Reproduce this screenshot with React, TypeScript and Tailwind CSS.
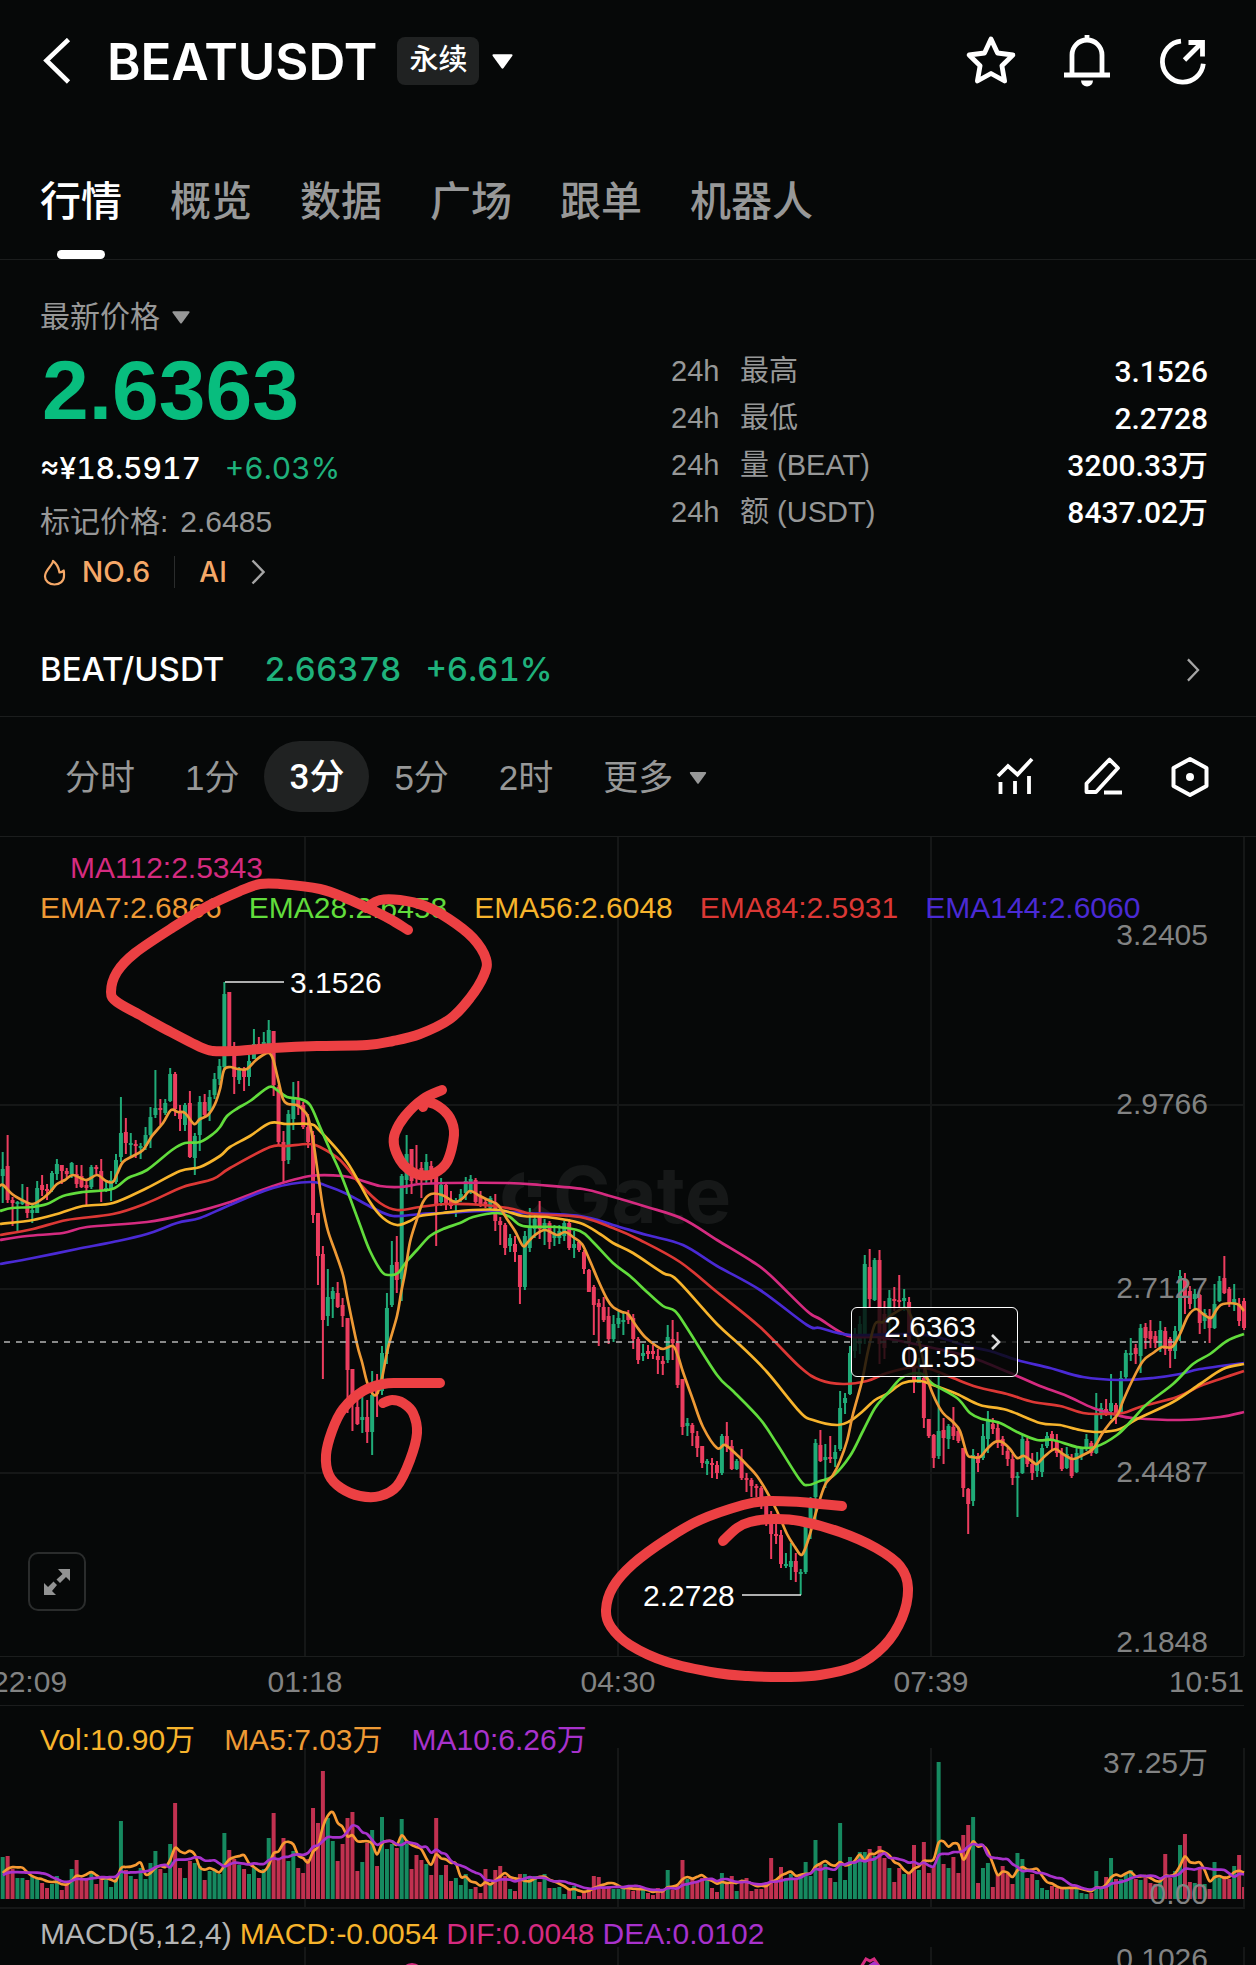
import { useState } from 'react';

type Point = [number, number];

const CANDLE_STEP = 4.926;
const CANDLE_START = 2.7;

// direction, high, body top, body bottom, low (chart units)
const candleData = `
g 315 332 339 366|r 298 329 363 366|r 360 363 366 389|g 364 365 367 394|g 347 364 367 368|r 350 366 376 381|g 366 373 376 386
g 344 351 376 376|r 338 348 353 359|r 347 352 354 363|g 334 336 353 355|g 322 327 337 343|r 328 328 334 347|r 331 334 337 341
g 325 326 337 341|r 328 337 347 351|r 328 339 350 351|r 342 348 351 368|g 328 330 350 352|r 328 330 332 337|r 322 334 353 365
g 343 351 353 355|g 334 343 353 364|g 317 323 345 347|g 260 296 320 325|r 281 295 306 317|g 296 306 308 320|r 303 307 309 321
g 306 309 311 322|g 290 298 309 313|g 270 280 298 311|g 233 271 278 281|r 262 271 273 288|g 262 266 276 278|g 231 237 264 265
r 235 237 272 279|r 268 276 282 294|g 266 268 288 294|r 254 266 320 321|g 296 299 321 338|g 259 265 298 314|r 257 265 278 280
g 253 260 274 284|g 236 242 258 262|g 222 229 242 248|g 145 157 230 232|r 155 155 213 218|r 205 216 240 257|g 230 232 243 247
r 230 232 240 254|g 218 224 240 249|g 192 207 222 222|r 200 207 212 214|g 195 205 212 214|g 183 193 207 212|r 194 194 248 259
r 248 250 305 309|r 294 305 324 345|g 273 277 323 327|g 245 262 282 293|r 244 262 270 278|r 265 268 290 292|r 277 290 305 311
r 294 298 378 386|r 376 376 419 448|r 409 417 483 542|g 432 460 479 489|g 450 454 462 481|r 445 456 470 471|r 461 468 479 490
r 481 481 533 576|r 532 532 560 594|r 560 570 587 588|g 560 580 583 596|r 563 580 595 606|g 534 558 595 618|r 537 554 557 580
g 509 516 554 558|g 456 471 517 527|g 404 428 468 470|r 399 425 443 456|g 337 339 442 464|g 298 317 343 357|r 312 312 344 357
r 308 333 341 346|r 325 331 338 361|g 317 325 342 346|r 324 329 342 346|r 340 340 369 409|g 341 348 365 369|r 347 348 367 373
r 354 363 369 372|g 361 363 368 380|g 352 357 363 365|g 340 344 356 363|g 338 342 354 357|r 341 343 365 368|r 354 359 367 370
r 361 365 368 371|g 359 361 371 373|r 357 365 384 394|r 380 384 388 408|r 386 388 411 418|g 397 401 409 415|r 399 407 415 425
r 418 418 450 467|g 394 399 450 453|g 371 390 411 415|g 378 382 392 401|r 364 380 392 402|g 382 386 394 408|r 384 386 405 412
g 388 397 401 409|g 388 394 401 407|g 384 386 399 404|r 382 386 411 413|g 394 407 411 421|r 403 405 413 415|r 413 415 432 437
r 432 433 455 455|r 448 450 468 498|r 462 466 470 509|r 460 470 483 485|r 470 479 502 507|g 478 487 502 505|g 474 481 487 491
g 475 483 485 498|r 473 477 483 487|r 477 481 502 512|r 500 502 523 527|g 507 516 519 524|r 508 514 517 522|r 508 514 517 522
r 512 519 523 537|r 519 524 527 538|g 488 500 523 526|r 483 502 506 523|r 495 506 548 551|r 542 542 590 598|g 581 586 589 599
r 586 588 596 609|r 594 599 611 620|r 609 609 626 631|g 622 624 627 638|r 621 626 628 641|r 624 628 636 642|g 597 599 636 638
r 585 599 609 615|r 603 609 632 633|g 622 624 632 633|r 612 622 641 643|r 636 641 643 655|r 641 643 649 660|r 647 649 651 660
r 649 651 666 672|r 664 668 685 689|r 674 681 697 722|r 687 697 699 707|r 693 698 727 731|g 716 727 729 731|g 706 724 730 743
r 716 724 735 745|g 732 735 737 758|g 685 687 735 737|g 660 668 685 702|g 602 606 660 683|r 593 608 624 625|g 607 620 623 651
r 599 620 622 626|g 608 615 622 630|g 554 571 612 614|g 556 561 566 577|g 509 516 557 558|g 491 497 514 521|g 479 487 507 517
g 418 427 497 507|r 412 430 462 471|g 421 423 463 464|r 413 423 507 527|r 464 477 511 522|g 453 461 484 497|r 450 462 464 474
r 438 463 465 471|g 452 461 464 474|r 460 465 507 531|r 517 531 544 556|g 521 537 546 546|r 531 541 581 591|r 582 582 599 601
r 597 598 621 631|g 537 594 619 622|r 581 593 601 627|g 587 589 602 612|r 570 590 599 603|r 591 594 604 606|r 611 611 651 660
r 651 652 667 697|g 612 618 664 669|r 616 619 626 635|g 587 599 621 623|g 574 584 602 616|r 581 587 592 597|r 586 591 606 611
r 599 602 609 618|r 611 614 622 629|r 617 622 641 648|g 635 639 641 680|g 598 602 636 637|r 601 604 627 630|r 616 627 636 643
g 615 626 634 640|g 607 611 635 640|g 595 599 609 611|r 594 597 602 614|r 597 604 616 620|r 611 616 632 634|g 610 617 631 632
r 617 621 639 641|g 611 616 635 636|g 610 612 619 623|g 597 602 612 614|r 604 606 616 619|g 556 576 616 617|g 566 571 577 582
r 562 572 577 579|g 537 566 574 582|r 566 568 577 587|g 534 541 576 577|g 513 516 540 542|g 501 516 518 524|r 507 511 517 527
g 487 491 519 536|r 486 490 501 512|r 483 494 502 511|r 494 499 506 511|g 484 493 510 515|r 490 494 512 518|r 500 502 514 531
g 489 494 514 522|g 433 439 494 504|r 436 442 461 477|r 449 454 467 472|g 452 457 462 472|r 457 458 486 497|g 472 476 484 492
r 472 479 491 506|g 447 467 491 492|g 439 444 464 465|r 419 441 456 457|r 450 452 467 470|g 447 462 466 474|r 461 467 484 489
r 461 464 491 493`;

const candles = candleData
  .trim()
  .split(/[|\n]/)
  .map((row, i) => {
    const [dir, ...rest] = row.split(' ');
    const [high, top, bottom, low] = rest.map(Number);
    return { x: CANDLE_START + i * CANDLE_STEP, up: dir === 'g', high, top, bottom, low };
  });

const volumes = [
  42, 43, 30, 21, 21, 19, 23, 20, 16, 11, 15, 23, 9, 15, 30, 39, 20, 19, 26, 15, 23, 21, 12, 20, 78, 29, 23, 20, 31, 20,
  36, 48, 30, 26, 55, 96, 31, 21, 38, 36, 33, 19, 28, 29, 25, 66, 49, 40, 34, 30, 25, 31, 21, 30, 61, 86, 40, 61, 38, 48,
  31, 26, 40, 91, 76, 128, 81, 58, 38, 55, 81, 87, 28, 37, 56, 69, 33, 82, 50, 55, 51, 80, 55, 30, 44, 39, 35, 24, 81, 24,
  34, 18, 21, 14, 25, 10, 12, 6, 30, 15, 29, 33, 23, 10, 8, 25, 25, 21, 23, 17, 25, 11, 11, 12, 5, 9, 13, 3, 6, 10, 23, 22,
  11, 13, 10, 10, 11, 12, 8, 9, 9, 6, 4, 11, 9, 29, 9, 13, 39, 20, 21, 18, 21, 20, 11, 7, 26, 16, 23, 8, 18, 21, 8, 10, 10,
  16, 41, 18, 32, 21, 25, 20, 23, 37, 23, 59, 35, 35, 21, 17, 76, 19, 42, 38, 47, 47, 50, 43, 53, 41, 31, 17, 31, 25, 25,
  54, 29, 57, 26, 33, 137, 35, 31, 42, 26, 64, 74, 82, 16, 31, 36, 12, 25, 33, 25, 15, 46, 40, 21, 25, 19, 11, 9, 13, 11,
  11, 11, 10, 12, 6, 5, 6, 28, 11, 22, 41, 20, 20, 25, 29, 20, 19, 21, 16, 15, 18, 45, 21, 28, 54, 65, 17, 16, 31, 15, 10,
  37, 21, 23, 20, 33, 44, 12,
];

const averages = [
  {
    name: 'MA112',
    color: '#d52b80',
    points:
      '0,403 27,399 63,396 87,390 147,385 187,377 227,366 273,349 310,339 343,339 360,343 380,349 400,350 420,347 447,346 507,346 540,348 583,352 610,359 647,370 683,382 717,403 753,425 770,438 807,474 820,482 840,495 853,500 877,500 900,504 933,511 973,521 1017,539 1040,549 1067,559 1093,571 1117,578 1133,581 1180,583 1220,580 1244,575',
  },
  {
    name: 'EMA144',
    color: '#4a2ad4',
    points:
      '0,427 33,421 77,412 113,405 147,397 177,386 200,381 230,368 273,351 310,345 327,349 347,357 373,371 393,379 420,377 443,376 487,374 523,376 580,379 613,388 647,398 683,408 717,429 760,453 807,488 820,491 850,498 900,497 933,499 967,509 990,514 1017,523 1050,531 1083,540 1120,543 1153,541 1180,537 1200,532 1244,526',
  },
  {
    name: 'EMA84',
    color: '#dc3835',
    points:
      '0,398 33,392 67,383 113,377 147,366 183,350 213,342 230,331 270,310 287,309 308,307 320,310 340,323 360,347 380,366 397,373 420,370 447,367 483,368 513,372 533,377 580,380 613,391 640,403 680,425 717,455 760,490 800,530 820,543 843,547 867,544 887,536 913,530 930,532 953,541 977,550 1007,557 1033,565 1060,569 1083,576 1100,577 1123,576 1140,570 1177,560 1200,549 1223,541 1244,534',
  },
  {
    name: 'EMA56',
    color: '#f7b42c',
    points:
      '0,387 33,383 57,377 83,369 113,366 147,351 180,334 200,330 220,319 230,310 250,299 270,286 287,287 310,287 320,294 347,325 370,365 383,381 397,388 410,384 420,379 443,376 473,373 500,373 523,379 547,380 580,386 600,397 613,406 633,416 663,436 677,443 717,487 740,508 767,535 800,575 813,583 837,588 850,584 863,574 875,563 887,557 903,546 920,544 933,548 957,557 980,568 1007,573 1040,586 1060,588 1080,593 1100,595 1120,592 1137,582 1173,565 1200,547 1223,532 1244,527',
  },
  {
    name: 'EMA28',
    color: '#61dc3c',
    points:
      '0,374 12,371 32,370 47,367 63,359 83,355 112,352 128,341 147,333 172,313 185,306 200,305 213,297 220,290 227,279 238,271 250,264 269,250 277,253 287,260 300,262 310,268 320,290 330,313 340,335 350,361 360,388 370,414 382,435 390,438 398,436 407,424 417,413 430,399 443,392 460,386 473,380 497,376 510,380 523,389 557,390 580,394 593,405 613,426 630,439 647,455 663,469 675,474 687,491 717,538 733,554 760,582 777,607 800,643 808,648 820,644 833,639 850,619 863,594 875,571 887,557 900,542 910,537 922,537 933,547 957,561 970,576 982,582 1000,586 1017,595 1037,603 1053,603 1077,610 1095,610 1117,598 1133,582 1147,567 1173,547 1193,527 1210,517 1227,504 1244,497',
  },
  {
    name: 'EMA7',
    color: '#ee9a35',
    points:
      '0,349 3,348 12,357 20,362 32,367 42,362 50,355 57,347 65,343 73,338 86,343 97,338 106,344 113,345 117,337 123,325 133,319 143,313 152,299 163,286 171,273 178,275 185,276 194,287 200,282 208,278 215,267 220,252 224,233 230,230 238,232 247,232 255,224 263,218 269,216 273,222 278,242 283,262 288,267 297,268 303,273 308,280 313,303 318,337 323,371 328,394 335,414 343,438 348,464 357,507 362,525 367,545 372,556 377,557 382,541 388,511 397,479 401,456 405,436 410,405 417,382 423,365 431,357 442,358 455,365 463,361 470,354 480,359 488,363 498,368 507,382 515,394 523,409 528,405 535,398 545,393 557,398 565,395 573,400 582,407 590,424 598,443 607,462 613,470 622,475 628,477 637,490 645,500 655,508 663,512 673,509 678,519 683,535 693,563 703,590 717,611 725,608 737,618 747,628 757,639 767,655 777,674 787,697 795,710 801,718 805,712 810,697 817,672 825,648 833,638 840,624 847,604 853,577 862,544 868,514 875,487 883,485 893,477 905,471 910,477 917,497 925,531 928,544 935,562 943,576 953,585 960,594 967,617 972,620 980,620 987,612 995,605 1002,605 1010,612 1017,621 1024,619 1033,625 1037,627 1045,619 1055,612 1063,617 1073,622 1083,618 1093,612 1102,597 1110,586 1118,577 1123,564 1133,542 1143,524 1153,516 1162,510 1172,510 1180,497 1188,479 1196,472 1203,477 1211,481 1217,472 1223,467 1237,467 1244,474',
  },
];

// hand-drawn marks around the highs and lows
const marks = [
  '408,93 390,82 372,73 348,62 320,52 280,47 260,47 240,54 208,69 172,91 135,116 117,135 111,155 117,165 140,178 167,193 200,210 213,214 233,214 273,211 317,209 367,208 393,204 420,197 450,182 470,161 484,138 486,122 473,101 449,82 425,69 400,63 380,63 366,71',
  '442,253 423,262 405,279 395,296 394,308 400,323 408,332 420,338 433,337 447,325 454,298 450,281 438,269 425,265 423,270',
  '440,546 400,546 383,547 363,554 343,572 332,594 326,618 329,638 341,651 360,659 380,659 397,649 410,623 417,596 413,576 403,566 392,563 383,566',
  '842,669 820,667 800,665 767,664 743,668 700,683 667,702 633,727 613,750 606,773 611,790 630,808 667,825 717,836 748,839 788,840 820,838 856,829 884,809 902,781 908,751 900,729 876,711 840,695 800,684 773,682 750,685 737,691 723,704',
];

const parsePoints = (text: string) =>
  text.split(' ').map((pair) => pair.split(',').map(Number) as Point);

// Catmull-Rom spline through the given points
function smoothPath(points: Point[]) {
  let d = `M${points[0][0]} ${points[0][1]}`;
  for (let i = 0; i < points.length - 1; i++) {
    const p0 = points[Math.max(i - 1, 0)];
    const p1 = points[i];
    const p2 = points[i + 1];
    const p3 = points[Math.min(i + 2, points.length - 1)];
    const c1 = [p1[0] + (p2[0] - p0[0]) / 6, p1[1] + (p2[1] - p0[1]) / 6];
    const c2 = [p2[0] - (p3[0] - p1[0]) / 6, p2[1] - (p3[1] - p1[1]) / 6];
    d += `C${c1[0].toFixed(1)} ${c1[1].toFixed(1)} ${c2[0].toFixed(1)} ${c2[1].toFixed(1)} ${p2[0]} ${p2[1]}`;
  }
  return d;
}

function movingAverage(values: number[], period: number, base: number): Point[] {
  return values.map((_, i) => {
    const part = values.slice(Math.max(0, i - period + 1), i + 1);
    // the bars before the window are not loaded, assume a quiet market there
    const missing = period - part.length;
    const sum = part.reduce((a, b) => a + b, 0) + missing * 22;
    return [CANDLE_START + i * CANDLE_STEP, base - sum / period];
  });
}

const GRID_X = [305, 618, 931, 1244];
const GRID_Y = [268, 452, 636];

const priceLabels = [
  { text: '3.2405', y: 97 },
  { text: '2.9766', y: 266 },
  { text: '2.7127', y: 450 },
  { text: '2.4487', y: 634 },
  { text: '2.1848', y: 804 },
];

const tabs = ['行情', '概览', '数据', '广场', '跟单', '机器人'];
const periods = ['分时', '1分', '3分', '5分', '2时'];

const stats = [
  { label: '最高', value: '3.1526' },
  { label: '最低', value: '2.2728' },
  { label: '量 (BEAT)', value: '3200.33万' },
  { label: '额 (USDT)', value: '8437.02万' },
];

function Caret({ className }: { className: string }) {
  return (
    <svg viewBox="0 0 20 14" className={className} fill="currentColor" aria-hidden="true">
      <path d="M1.5 0h17q1.6.2.8 1.7L11 13.2q-1 1.2-2 0L.7 1.7Q-.1.2 1.5 0Z" />
    </svg>
  );
}

function ChevronRight({ className }: { className: string }) {
  return (
    <svg viewBox="0 0 14 26" className={className} fill="none" stroke="currentColor" strokeWidth="2.4" aria-hidden="true">
      <path d="m1.5 1.5 11 11.5-11 11.5" />
    </svg>
  );
}

function Header() {
  return (
    <header className="flex h-[122px] items-center justify-between px-[41px]">
      <div className="flex items-center">
        <button type="button" aria-label="返回" className="mr-9 pl-[2px]">
          <svg viewBox="0 0 28 46" className="h-[46px] w-7" fill="none" stroke="currentColor" strokeWidth="4.6">
            <path d="M25.5 1.5 3.500 22.500l22 21.500" />
          </svg>
        </button>
        <h1 className="font-['Inter',sans-serif] text-[51px] leading-none font-semibold">BEATUSDT</h1>
        <button type="button" aria-haspopup="menu" className="ml-5 flex items-center gap-[13px]">
          <span className="flex h-12 items-center rounded-lg bg-[#202222] px-3 text-[29px] font-medium">永续</span>
          <Caret className="h-[15px] w-[21px]" />
        </button>
      </div>
      <div className="flex items-center gap-11 pr-[6px]">
        <button type="button" aria-label="收藏">
          <svg viewBox="0 0 52 52" className="size-[52px]" fill="none" stroke="currentColor" strokeWidth="4.8" strokeLinejoin="round">
            <path d="m26 4 6.500 14 15.400 2-11 10.700 2.700 15.300L26 38.500 12.400 46l2.700-15.300L4.100 20l15.400-2Z" />
          </svg>
        </button>
        <button type="button" aria-label="提醒">
          <svg viewBox="0 0 52 52" className="size-[52px]" fill="none" stroke="currentColor" strokeWidth="4.8">
            <path d="M26 0v6M11 40V20a15 15 0 0 1 30 0v20M3 40h46" />
            <path d="M20 45.500h12a6 6 0 0 1-12 0Z" fill="currentColor" stroke="none" />
          </svg>
        </button>
        <button type="button" aria-label="分享">
          <svg viewBox="0 0 52 52" className="size-[52px]" fill="none" stroke="currentColor" strokeWidth="4.8">
            <path d="M24 6.200a20.500 20.500 0 1 0 22.300 22.600" />
            <path d="M27.500 25 44 8.500M31.500 7.500h14v14" />
          </svg>
        </button>
      </div>
    </header>
  );
}

function Tabs() {
  const [active, setActive] = useState('行情');
  return (
    <nav className="flex gap-12 border-b border-[#1b1d1d] px-10 pt-14">
      {tabs.map((tab) => (
        <button
          key={tab}
          type="button"
          onClick={() => setActive(tab)}
          className={`flex flex-col items-center text-[41px] leading-[48px] font-medium ${tab === active ? 'text-white' : 'text-[#979898]'}`}
        >
          {tab}
          <span className={`mt-6 h-[9px] w-12 rounded-full ${tab === active ? 'bg-white' : ''}`} />
        </button>
      ))}
    </nav>
  );
}

function Summary() {
  return (
    <section className="flex justify-between px-10 pt-9">
      <div>
        <div className="flex h-[42px] items-center gap-3 text-[#979898]">
          <label htmlFor="price-type" className="sr-only">价格类型</label>
          <select id="price-type" className="appearance-none bg-transparent text-[30px] leading-[42px] outline-none">
            <option>最新价格</option>
            <option>标记价格</option>
            <option>指数价格</option>
          </select>
          <Caret className="h-[13px] w-[18px]" />
        </div>
        <p className="mt-3 pl-[2px] text-[84px] leading-[80px] font-bold text-[#08bd7e]">2.6363</p>
        <p className="mt-[17px] flex gap-6 font-['Inter','Noto_Sans_CJK_SC',sans-serif] text-[30px] leading-[42px] font-medium">
          <span>≈¥18.5917</span>
          <span className="font-normal text-[#1fb27c]">+6.03%</span>
        </p>
        <p className="mt-3 flex gap-3 text-[30px] leading-[42px] text-[#979898]">
          <span>标记价格:</span>
          <span>2.6485</span>
        </p>
        <a
          href="#rank"
          className="mt-2 flex h-[42px] items-center font-['Inter',sans-serif] text-[28px] font-medium text-[#f5a868]"
        >
          <svg viewBox="0 0 24 28" className="mr-[15px] ml-[3px] h-7 w-6" fill="none" stroke="currentColor" strokeWidth="2.2" strokeLinejoin="round">
            <path d="M10 3C9.500 8 2 11.500 2 18.500 2 23 6 26.500 11.500 26.500S21 23 21 18c0-2 .2-3.800-.3-5.500-1 1.200-2.200 1.800-4.200 2C15.800 9.500 13.500 5.500 10 3Z" />
          </svg>
          NO.6
          <span className="mx-6 h-8 w-px bg-[#2a2c2c]" />
          AI
          <ChevronRight className="ml-6 h-[26px] w-[14px] text-[#a5a5a5]" />
        </a>
      </div>
      <table className="mt-[52px] mr-2 w-[537px] self-start text-[29px]">
        <tbody>
          {stats.map((stat) => (
            <tr key={stat.label} className="h-[47px]">
              <th scope="row" className="w-[69px] text-left font-normal text-[#979898]">24h</th>
              <td className="text-[#979898]">{stat.label}</td>
              <td className="text-right font-['Roboto','Noto_Sans_CJK_SC',sans-serif] text-[30px] leading-[40px] font-medium">
                {stat.value}
              </td>
            </tr>
          ))}
        </tbody>
      </table>
    </section>
  );
}

function SpotRow() {
  return (
    <a
      href="#spot"
      className="mt-[31px] flex h-[93px] items-center border-b border-[#1b1d1d] px-10 font-['Inter',sans-serif] text-[33px] font-medium"
    >
      BEAT/USDT
      <span className="ml-10 text-[#1fb27c]">2.66378</span>
      <span className="ml-6 text-[#1fb27c]">+6.61%</span>
      <ChevronRight className="mr-4 ml-auto h-6 w-[14px] text-[#a5a5a5]" />
    </a>
  );
}

function Toolbar() {
  const [period, setPeriod] = useState('3分');
  return (
    <div className="flex h-[120px] items-center justify-between border-b border-[#1b1d1d] pr-[46px] pl-10">
      <div className="flex items-center text-[35px] text-[#979898]">
        {periods.map((item) => (
          <button
            key={item}
            type="button"
            onClick={() => setPeriod(item)}
            className={`h-[71px] rounded-full px-[25px] pt-[3px] ${item === period ? "bg-[#202222] font-['Roboto','Noto_Sans_CJK_SC',sans-serif] font-medium text-white" : ''}`}
          >
            {item}
          </button>
        ))}
        <button type="button" aria-haspopup="menu" className="flex items-center gap-4 pt-[3px] pl-[25px]">
          更多
          <Caret className="h-3 w-[18px]" />
        </button>
      </div>
      <div className="flex items-center gap-[47px]">
        <button type="button" aria-label="指标">
          <svg viewBox="0 0 40 42" className="h-[42px] w-10" fill="none" stroke="currentColor" strokeWidth="3.8">
            <path d="m2 20 10-10 9.500 8.500L36 3M4.500 26v12M19 25v13M33 20v18" />
          </svg>
        </button>
        <button type="button" aria-label="画线">
          <svg viewBox="0 0 40 42" className="h-[42px] w-10" fill="none" stroke="currentColor" strokeWidth="3.8" strokeLinejoin="round">
            <path d="M26.500 3.500 35 12 13 36H3.500v-8.500ZM21 36.500h18" />
          </svg>
        </button>
        <button type="button" aria-label="图表设置">
          <svg viewBox="0 0 40 42" className="h-[42px] w-10" fill="none" stroke="currentColor" strokeWidth="4" strokeLinejoin="round">
            <path d="M20 3 36.500 12v18L20 39 3.500 30V12Z" />
            <circle cx="20" cy="21" r="4" fill="currentColor" stroke="none" />
          </svg>
        </button>
      </div>
    </div>
  );
}

function PriceChart() {
  return (
    <section className="relative">
      <svg viewBox="0 0 1256 819" className="block w-full" role="img" aria-label="BEATUSDT 3分钟K线">
        <g stroke="#151717" strokeWidth="2">
          {GRID_X.map((x) => (
            <line key={x} x1={x} x2={x} y1="0" y2="819" />
          ))}
          {GRID_Y.map((y) => (
            <line key={y} x1="0" x2="1244" y1={y} y2={y} />
          ))}
        </g>

        <g fill="#161818">
          <path d="M524 335a26 26 0 1 0 26 40l-12-8a12 12 0 1 1-14-17Z" />
          <path d="M528 343h13v17h-13Z" />
          <text x="553" y="386" fontSize="78" fontWeight="700" className="font-['Inter',sans-serif]">Gate</text>
        </g>

        {candles.map((c) => (
          <g key={c.x} fill={c.up ? '#20ab78' : '#ec3d5f'}>
            <rect x={c.x - 1} y={c.high} width="2" height={c.low - c.high} />
            <rect x={c.x - 2} y={c.top} width="4" height={Math.max(c.bottom - c.top, 2)} />
          </g>
        ))}

        {averages.map((line) => (
          <path key={line.name} d={smoothPath(parsePoints(line.points))} fill="none" stroke={line.color} strokeWidth="2.7" />
        ))}

        <line x1="4" x2="1206" y1="505" y2="505" stroke="#b4b4b4" strokeWidth="1.5" strokeDasharray="6 6" />

        <path d="M225 145h59M742 758h59" stroke="#e6e6e6" strokeWidth="1.5" />
        <g fill="#fff" fontSize="30" dominantBaseline="central">
          <text x="290" y="145">3.1526</text>
          <text x="643" y="758">2.2728</text>
        </g>

        <g fill="#828383" fontSize="30" textAnchor="end" dominantBaseline="central">
          {priceLabels.map((label) => (
            <text key={label.text} x="1208" y={label.y}>{label.text}</text>
          ))}
        </g>
      </svg>

      <div className="absolute top-[11px] left-0 w-full text-[30px] leading-[40px] whitespace-nowrap">
        <p className="pl-[70px] text-[#d52b80]">MA112:2.5343</p>
        <p className="flex gap-[27px] pl-10">
          <span className="text-[#ee9a35]">EMA7:2.6866</span>
          <span className="text-[#61dc3c]">EMA28:2.6458</span>
          <span className="text-[#f7b42c]">EMA56:2.6048</span>
          <span className="text-[#dc3835]">EMA84:2.5931</span>
          <span className="text-[#4a2ad4]">EMA144:2.6060</span>
        </p>
      </div>

      <button
        type="button"
        className="absolute top-[470px] left-[851px] flex h-[70px] w-[167px] items-center justify-end gap-[15px] rounded-md border border-white bg-[#060808]/80 pr-4 text-right text-[30px] leading-[30px]"
      >
        <span>
          2.6363
          <br />
          01:55
        </span>
        <svg viewBox="0 0 10 16" className="h-4 w-[10px]" fill="none" stroke="#ddd" strokeWidth="2.6">
          <path d="m1 1 7 7-7 7" />
        </svg>
      </button>

      <button
        type="button"
        aria-label="全屏"
        className="absolute top-[715px] left-7 flex h-[59px] w-[58px] items-center justify-center rounded-[10px] border-2 border-[#2a2c2c]"
      >
        <svg viewBox="0 0 28 28" className="size-7" fill="#929393" aria-hidden="true">
          <path d="M15 1h12v12l-4-4-6 6-3.500-3.500 6-5.500ZM1 15l4 4 5.500-5.500L14 17l-5 6 4 4H1Z" />
        </svg>
      </button>

      <svg viewBox="0 0 1256 860" className="pointer-events-none absolute top-0 left-0 z-10 w-full" aria-hidden="true">
        {marks.map((mark) => (
          <path
            key={mark}
            d={smoothPath(parsePoints(mark))}
            fill="none"
            stroke="#ec4043"
            strokeWidth="10"
            strokeLinecap="round"
            strokeLinejoin="round"
          />
        ))}
      </svg>
    </section>
  );
}

function TimeAxis() {
  return (
    <div className="mr-3 -ml-2 grid h-[50px] grid-cols-[1fr_2fr_2fr_2fr_1fr] items-center border-y border-[#1b1d1d] pt-[2px] text-center text-[30px] leading-[40px] text-[#828383]">
      <span className="text-left">22:09</span>
      <span>01:18</span>
      <span>04:30</span>
      <span>07:39</span>
      <span className="text-right">10:51</span>
    </div>
  );
}

function VolumeChart() {
  const base = 193;
  return (
    <section className="relative">
      <svg viewBox="0 0 1256 203" className="block w-full" role="img" aria-label="成交量">
        <g stroke="#151717" strokeWidth="2">
          {GRID_X.map((x) => (
            <line key={x} x1={x} x2={x} y1="42" y2="203" />
          ))}
          <line x1="0" x2="1244" y1="202" y2="202" />
        </g>
        {candles.map((c, i) => (
          <rect
            key={c.x}
            x={c.x - 2}
            y={base - volumes[i]}
            width={Math.min(4, 1244 - c.x + 2)}
            height={volumes[i]}
            fill={c.up ? '#168a60' : '#c13150'}
          />
        ))}
        <path d={smoothPath(movingAverage(volumes, 5, base))} fill="none" stroke="#f79a33" strokeWidth="2.7" />
        <path d={smoothPath(movingAverage(volumes, 10, base))} fill="none" stroke="#a832cc" strokeWidth="2.7" />
        <g fill="#828383" fontSize="30" textAnchor="end" dominantBaseline="central">
          <text x="1208" y="56">37.25万</text>
          <text x="1208" y="187">0.00</text>
        </g>
      </svg>
      <p className="absolute top-[14px] left-10 flex gap-[29px] text-[30px] leading-[40px]">
        <span className="text-[#f7b42c]">Vol:10.90万</span>
        <span className="text-[#ee9a35]">MA5:7.03万</span>
        <span className="text-[#a832cc]">MA10:6.26万</span>
      </p>
    </section>
  );
}

function MacdChart() {
  return (
    <section className="relative h-[57px] overflow-hidden">
      <svg viewBox="0 0 1256 57" className="block w-full" role="img" aria-label="MACD">
        <g stroke="#151717" strokeWidth="2">
          {GRID_X.map((x) => (
            <line key={x} x1={x} x2={x} y1="38" y2="57" />
          ))}
        </g>
        <g fill="none" strokeWidth="3">
          <path d="M405 58q7-5 14 0" stroke="#d52b80" />
          <path d="M861 58 866 50 870 52 874 50 879 57" stroke="#d52b80" />
          <path d="M868 58 874 54 880 58" stroke="#a832cc" />
        </g>
        <text x="1208" y="49" fill="#828383" fontSize="30" textAnchor="end" dominantBaseline="central">0.1026</text>
      </svg>
      <p className="absolute top-[5px] left-10 flex gap-2 text-[30px] leading-[40px]">
        <span className="text-[#b4b5b5]">MACD(5,12,4)</span>
        <span className="text-[#f7b42c]">MACD:-0.0054</span>
        <span className="text-[#d52b80]">DIF:0.0048</span>
        <span className="text-[#a832cc]">DEA:0.0102</span>
      </p>
    </section>
  );
}

export default function App() {
  return (
    <main className="min-h-screen overflow-hidden bg-[#060808] font-['Liberation_Sans','Noto_Sans_CJK_SC',sans-serif] text-white tabular-nums">
      <Header />
      <Tabs />
      <Summary />
      <SpotRow />
      <Toolbar />
      <PriceChart />
      <TimeAxis />
      <VolumeChart />
      <MacdChart />
    </main>
  );
}
